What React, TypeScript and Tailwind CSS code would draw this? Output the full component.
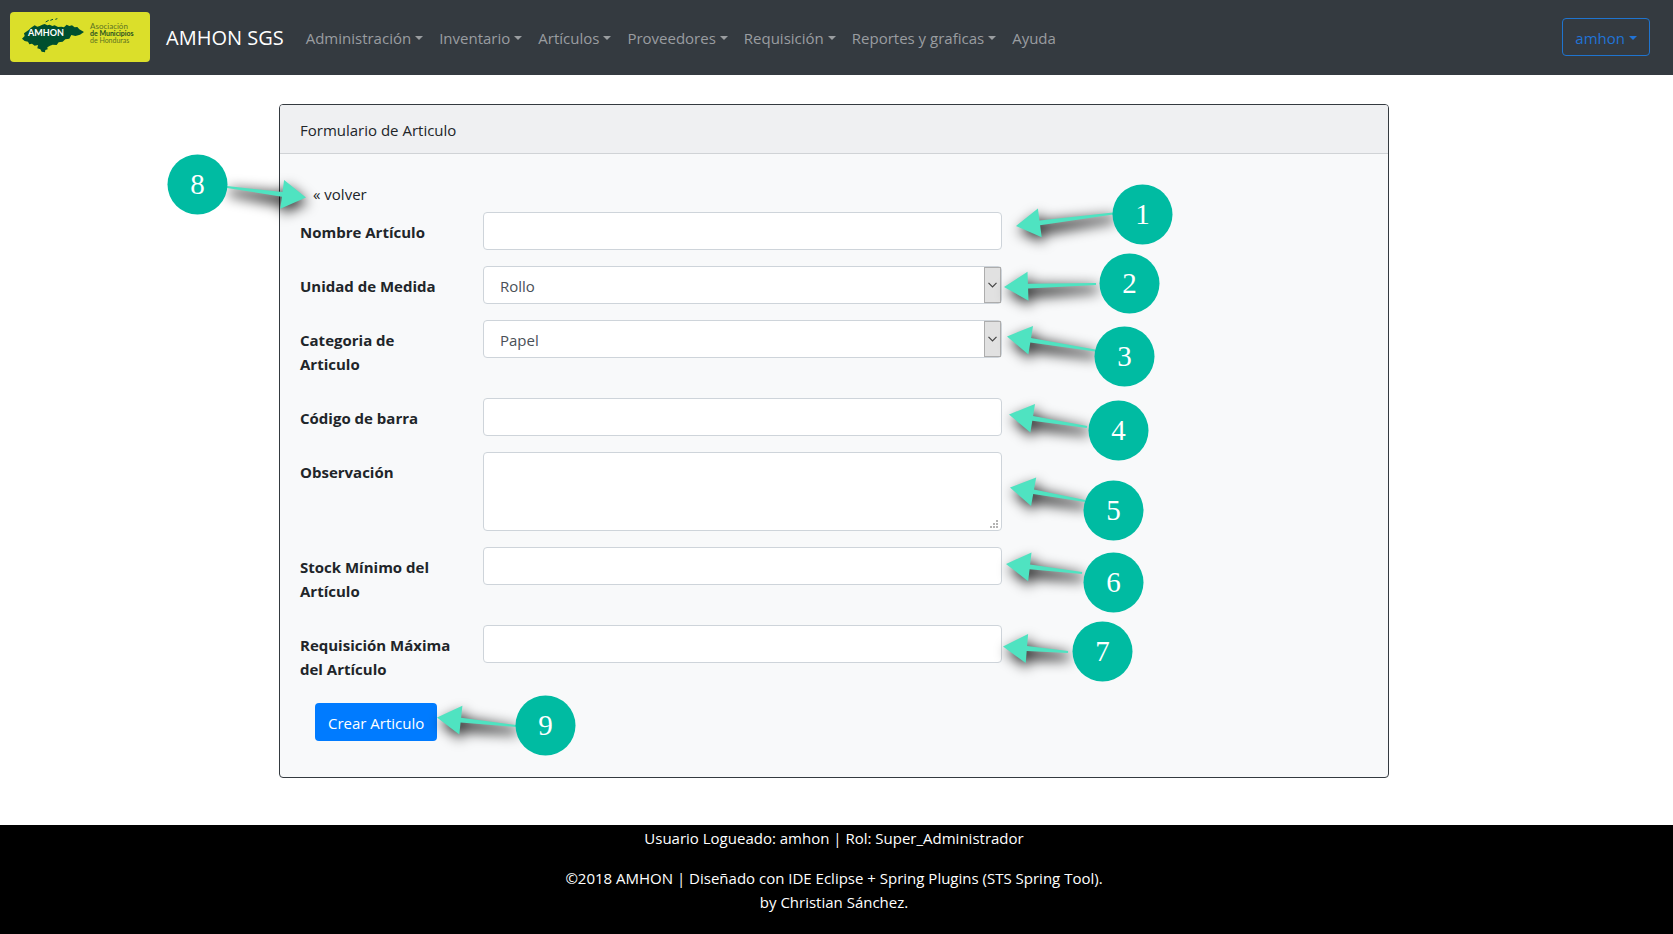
import type { ReactNode } from "react";

type Point = [number, number];

const menus = ["Administración", "Inventario", "Artículos", "Proveedores", "Requisición", "Reportes y graficas"];

const callouts: { label: string; center: Point; tip: Point; tail: Point }[] = [
  { label: "1", center: [1142.5, 214.5], tip: [1016, 226], tail: [1113, 213.5] },
  { label: "2", center: [1129.5, 283.5], tip: [1004, 287], tail: [1096, 284] },
  { label: "3", center: [1124.5, 356.5], tip: [1007, 336.5], tail: [1095, 350.5] },
  { label: "4", center: [1118.5, 430.5], tip: [1009, 414.5], tail: [1087, 427] },
  { label: "5", center: [1113.5, 510.5], tip: [1010, 487.5], tail: [1085, 501] },
  { label: "6", center: [1113.5, 582.5], tip: [1006, 564], tail: [1082, 573] },
  { label: "7", center: [1102.5, 651.5], tip: [1003, 646.5], tail: [1068, 652] },
  { label: "8", center: [197.5, 184.5], tip: [306, 197.5], tail: [227, 187] },
  { label: "9", center: [545.5, 725.5], tip: [437, 717.5], tail: [516, 726] },
];

// Outline of an arrow whose shaft narrows towards its tail.
function arrowPoints(tip: Point, tail: Point, grow = 0) {
  const dx = tail[0] - tip[0];
  const dy = tail[1] - tip[1];
  const length = Math.hypot(dx, dy);
  const ux = dx / length;
  const uy = dy / length;
  const at = (along: number, side: number) =>
    `${(tip[0] + ux * along - uy * side).toFixed(1)},${(tip[1] + uy * along + ux * side).toFixed(1)}`;
  return [
    at(0, 0),
    at(24, 14.5),
    at(24, 2.4 + grow),
    at(length, 1 + grow / 2),
    at(length, -1 - grow / 2),
    at(24, -2.4 - grow),
    at(24, -14.5),
  ].join(" ");
}

function Callouts() {
  return (
    <svg
      className="pointer-events-none absolute -top-px -left-px h-[674px] w-[1110px] overflow-visible"
      viewBox="279 104 1110 674"
      aria-hidden="true"
    >
      <defs>
        <filter id="soft" x="-50%" y="-150%" width="200%" height="400%">
          <feGaussianBlur stdDeviation="6.5" />
        </filter>
      </defs>
      {callouts.map(({ label, center, tip, tail }) => (
        <g key={label}>
          <polygon
            points={arrowPoints(tip, tail, 4)}
            transform="translate(2 5)"
            fill="#000"
            fillOpacity="0.8"
            filter="url(#soft)"
          />
          <polygon points={arrowPoints(tip, tail)} fill="#4fe3c1" />
          <circle cx={center[0]} cy={center[1]} r="30" fill="#00bba2" />
          <text
            x={center[0]}
            y={center[1] + 9}
            textAnchor="middle"
            fill="#fff"
            className="font-['Liberation_Serif',serif] text-[29px]"
          >
            {label}
          </text>
        </g>
      ))}
    </svg>
  );
}

function Caret() {
  return (
    <span className="ml-1 inline-block border-x-4 border-t-4 border-x-transparent border-t-current align-[4px]" />
  );
}

function Logo() {
  return (
    <svg className="h-[50px] w-[140px]" viewBox="0 0 140 50" role="img" aria-label="AMHON">
      <rect width="140" height="50" rx="4" fill="#dbdf2a" />
      <g transform="translate(-2 -4) scale(.3333)">
        <path
          d="M42 92L50 84L48 76L62 66L68 60L80 52L88 56L95 54L103 50L110 48L118 52L125 50L133 54L140 52L150 57L160 56L168 58L176 50L184 54L192 52L200 58L208 57L214 64L228 72L216 80L202 84L190 81L184 92L172 94L164 101L152 103L146 111L134 110L126 113L118 118L119 124L112 126L111 133L101 131L97 124L88 121L90 111L80 113L72 107L64 109L60 101L50 99Z"
          fill="#00502f"
        />
        <path d="M113 42l9-5M127 37l8-3M142 34l6-2" stroke="#00502f" strokeWidth="3" />
      </g>
      <text x="18" y="24" fill="#fff" className="font-['Lato',sans-serif] text-[9px] font-bold">AMHON</text>
      <g fill="#5b7223" className="font-['Lato',sans-serif] text-[7px]">
        <text x="80" y="17" className="text-[8px]">Asociación</text>
        <text x="80" y="24" fill="#27501f" className="font-bold">de Municipios</text>
        <text x="80" y="31">de Honduras</text>
      </g>
    </svg>
  );
}

function Field({ id, label, children }: { id: string; label: string; children: ReactNode }) {
  return (
    <div className="mb-4 flex items-start">
      <label htmlFor={id} className="w-1/6 shrink-0 px-[15px] pt-2 pb-1.5 font-bold">
        {label}
      </label>
      <div className="flex w-1/2 px-[15px]">{children}</div>
    </div>
  );
}

const control = "w-full rounded border border-[#ced4da] bg-white px-3 text-[#495057]";

function SelectBox({ id, options }: { id: string; options: string[] }) {
  return (
    <div className="relative w-full">
      <select id={id} className={`${control} h-[38px] appearance-none pt-0.5 pl-4`}>
        {options.map((o) => (
          <option key={o}>{o}</option>
        ))}
      </select>
      <span className="pointer-events-none absolute inset-y-px right-px flex w-[17px] items-center justify-center border border-[#adadad] bg-[#e1e1e1]">
        <svg width="9" height="6" viewBox="0 0 9 6" fill="none" stroke="#444" strokeWidth="1.2">
          <path d="M.5 .8l4 4 4-4" />
        </svg>
      </span>
    </div>
  );
}

export default function App() {
  return (
    <div className="flex min-h-screen flex-col bg-white font-['Open_Sans','Noto_Sans',sans-serif] text-[15px] leading-6 text-[#212529]">
      <nav className="flex h-[75px] items-center bg-[#343a40] pr-[23px] pb-px pl-[10px]">
        <a href="#" className="mr-3.5 flex items-center gap-4 text-xl text-white">
          <Logo />
          <span className="pt-0.5">AMHON SGS</span>
        </a>
        <ul className="flex text-[#9a9da0]">
          {menus.map((m) => (
            <li key={m}>
              <a href="#" className="block px-2 pt-[9px] pb-[7px]">
                {m}
                <Caret />
              </a>
            </li>
          ))}
          <li>
            <a href="#" className="block px-2 pt-[9px] pb-[7px]">Ayuda</a>
          </li>
        </ul>
        <button className="ml-auto h-[38px] rounded border border-[#1f74cf] px-3 pt-0.5 text-[#2173d6]">
          amhon
          <Caret />
        </button>
      </nav>

      <main className="pr-[5px] pb-[47px]">
        <section className="relative mx-auto mt-[29px] max-w-[1110px] rounded border border-[#343a40] bg-[#f8f9fa]">
          <h1 className="rounded-t-[3px] border-b border-[#d0d3d6] bg-[#eff0f2] px-5 pt-[13px] pb-[11px]">
            Formulario de Articulo
          </h1>
          <form className="p-5" onSubmit={(e) => e.preventDefault()}>
            <a href="#" className="inline-block px-[13px] pt-2 pb-1.5 align-top">« volver</a>
            <div className="-mx-[15px]">
              <Field id="nombre" label="Nombre Artículo">
                <input id="nombre" className={`${control} h-[38px]`} />
              </Field>
              <Field id="unidad" label="Unidad de Medida">
                <SelectBox id="unidad" options={["Rollo"]} />
              </Field>
              <Field id="categoria" label="Categoria de Articulo">
                <SelectBox id="categoria" options={["Papel"]} />
              </Field>
              <Field id="codigo" label="Código de barra">
                <input id="codigo" className={`${control} h-[38px]`} />
              </Field>
              <Field id="observacion" label="Observación">
                <div className="relative flex w-full">
                  <textarea id="observacion" className={`${control} h-[79px] resize-none py-1.5`} />
                  <svg
                    className="pointer-events-none absolute right-1 bottom-[3px] size-2"
                    viewBox="0 0 8 8"
                    fill="#b4b4b4"
                  >
                    <path d="M6 0h2v2h-2zM3 3h2v2h-2zM6 3h2v2h-2zM0 6h2v2h-2zM3 6h2v2h-2zM6 6h2v2h-2z" />
                  </svg>
                </div>
              </Field>
              <Field id="stock" label="Stock Mínimo del Artículo">
                <input id="stock" className={`${control} h-[38px]`} />
              </Field>
              <Field id="maxima" label="Requisición Máxima del Artículo">
                <input id="maxima" className={`${control} h-[38px]`} />
              </Field>
            </div>
            <button className="mb-4 ml-[15px] block h-[38px] rounded bg-[#007bff] px-[13px] pt-0.5 text-white">
              Crear Articulo
            </button>
          </form>
          <Callouts />
        </section>
      </main>

      <footer className="grow bg-black pt-px pr-[5px] text-center text-white">
        <p className="mb-4">Usuario Logueado: amhon | Rol: Super_Administrador</p>
        <p>
          ©2018 AMHON | Diseñado con IDE Eclipse + Spring Plugins (STS Spring Tool).
          <br />
          by Christian Sánchez.
        </p>
      </footer>
    </div>
  );
}
